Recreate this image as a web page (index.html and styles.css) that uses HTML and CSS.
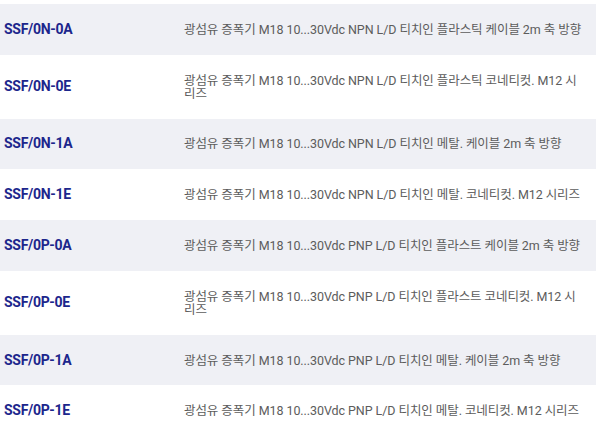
FILE: index.html
```html
<!DOCTYPE html>
<html lang="ko">
<head>
<meta charset="utf-8">
<link rel="stylesheet" href="styles.css">
</head>
<body>
<table class="products">
  <tbody>
    <tr class="row alt"><td class="code">SSF/0N-0A</td><td class="desc">광섬유 증폭기 M18 10...30Vdc NPN L/D 티치인 플라스틱 케이블 2m 축 방향</td></tr>
    <tr class="row"><td class="code">SSF/0N-0E</td><td class="desc">광섬유 증폭기 M18 10...30Vdc NPN L/D 티치인 플라스틱 코네티컷. M12 시리즈</td></tr>
    <tr class="row alt"><td class="code">SSF/0N-1A</td><td class="desc">광섬유 증폭기 M18 10...30Vdc NPN L/D 티치인 메탈. 케이블 2m 축 방향</td></tr>
    <tr class="row"><td class="code">SSF/0N-1E</td><td class="desc">광섬유 증폭기 M18 10...30Vdc NPN L/D 티치인 메탈. 코네티컷. M12 시리즈</td></tr>
    <tr class="row alt"><td class="code">SSF/0P-0A</td><td class="desc">광섬유 증폭기 M18 10...30Vdc PNP L/D 티치인 플라스트 케이블 2m 축 방향</td></tr>
    <tr class="row"><td class="code">SSF/0P-0E</td><td class="desc">광섬유 증폭기 M18 10...30Vdc PNP L/D 티치인 플라스트 코네티컷. M12 시리즈</td></tr>
    <tr class="row alt"><td class="code">SSF/0P-1A</td><td class="desc">광섬유 증폭기 M18 10...30Vdc PNP L/D 티치인 메탈. 케이블 2m 축 방향</td></tr>
    <tr class="row"><td class="code">SSF/0P-1E</td><td class="desc">광섬유 증폭기 M18 10...30Vdc PNP L/D 티치인 메탈. 코네티컷. M12 시리즈</td></tr>
  </tbody>
</table>
</body>
</html>
```

FILE: styles.css
```css
html, body {
  margin: 0;
  padding: 0;
  background: #ffffff;
}
body {
  padding-top: 4px;
  font-family: Roboto, "Noto Sans CJK KR", sans-serif;
}
.products {
  width: 596px;
  border-collapse: collapse;
  table-layout: fixed;
}
.row.alt {
  background: #eff0f5;
}
.products td {
  padding: 18.9px 0;
  line-height: 13px;
  vertical-align: middle;
}
.code {
  width: 180px;
  padding-left: 4px !important;
  font-size: 14px;
  font-weight: 700;
  letter-spacing: -0.3px;
  color: #1c268c;
}
.desc {
  padding-right: 12px !important;
  font-size: 12.5px;
  letter-spacing: -0.07px;
  color: #5c5c5c;
}
```
